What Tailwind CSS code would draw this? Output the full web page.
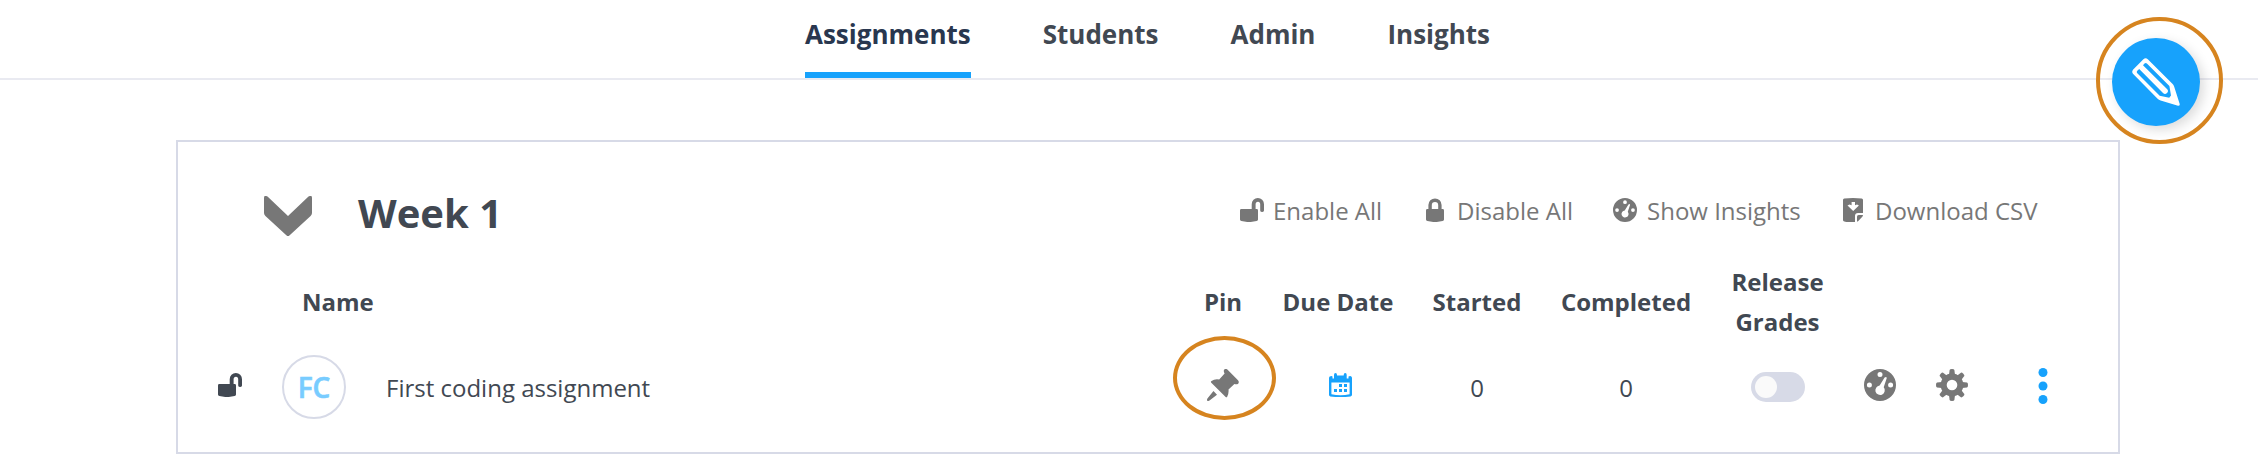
<!DOCTYPE html>
<html lang="en">
<head>
<meta charset="utf-8">
<title>Assignments</title>
<script src="https://cdn.jsdelivr.net/npm/@tailwindcss/browser@4"></script>
</head>
<body class="relative h-[472px] w-[2258px] overflow-hidden bg-white font-['Open_Sans',sans-serif] text-2xl text-[#414852]">
<svg class="hidden">
  <symbol id="unlock" viewBox="0 0 24 24"><path d="M1.2 11H11.7V6.2A6.15 6.15 0 0 1 24 6.2V12.6Q24 14 22.4 14Q20.2 14 20.2 12.4V6.6Q20.2 3.8 18 3.8Q15.6 3.8 15.6 6.6V11H16.8Q18 11 18 12.4V21.4Q18 22.7 16.6 23.1Q9 25 1.4 23.1Q0 22.700 0 21.4V12.400Q0 11 1.200 11Z"/></symbol>
  <symbol id="gauge" viewBox="0 0 32 32"><path fill-rule="evenodd" d="M16 0A16 16 0 1 1 16 32A16 16 0 1 1 16 0ZM16 3.100A2.500 2.500 0 1 0 16 8.100A2.500 2.500 0 1 0 16 3.100ZM5.400 13.600A2.500 2.500 0 1 0 5.400 18.600A2.500 2.500 0 1 0 5.400 13.600ZM26.600 13.600A2.500 2.500 0 1 0 26.600 18.600A2.500 2.500 0 1 0 26.600 13.600ZM20.600 8.500L15.600 16.600A4.700 4.700 0 1 0 19.700 18.300L22.700 9.200Q22.700 7.200 20.600 8.500Z"/></symbol>
</svg>

<header class="flex h-20 items-end border-b-2 border-[#e9eaf1] pl-[805px] text-[26px] font-bold leading-9">
  <nav class="flex h-[78px] gap-[72px] pt-4">
    <a class="border-b-[6px] border-[#17a2fc] text-[#29374f]">Assignments</a>
    <a>Students</a>
    <a>Admin</a>
    <a>Insights</a>
  </nav>
</header>

<main class="ml-[176px] mt-[60px] h-[314px] w-[1944px] border-2 border-[#d7dae7]">
  <div class="flex h-[120px] items-start">
    <svg class="ml-[86px] mt-[54px] h-10 w-12 shrink-0 fill-[#777]" viewBox="0 0 48 40"><path d="M3.500 .6L24 20L44.500 .6Q48-1.500 48 2V17Q48 18.700 46.600 20L25.400 39.400Q24 40.500 22.600 39.400L1.400 20Q0 18.700 0 17V2Q0-1.500 3.500 .6Z"/></svg>
    <h1 class="ml-[46px] mt-11 w-[882px] text-[40px] font-bold leading-[54px]">Week 1</h1>
    <div class="mt-[52px] flex whitespace-nowrap leading-[33px] text-[#777]">
      <div class="flex w-[186px]"><svg class="mr-[9px] mt-1 size-6 fill-current"><use href="#unlock"/></svg>Enable All</div>
      <div class="flex w-[187px]"><svg class="mr-[13px] mt-1 h-6 w-[18px] fill-current" viewBox="0 0 18 24"><path fill-rule="evenodd" d="M1.300 11H2.400V7A6.500 6.500 0 0 1 15.600 7V11H16.700Q18 11 18 12.400V21.400Q18 22.700 16.600 23.100Q9 25 1.400 23.100Q0 22.700 0 21.400V12.400Q0 11 1.300 11ZM5.800 11H12.200V7.200A3.200 3.200 0 0 0 5.800 7.200Z"/></svg>Disable All</div>
      <div class="flex w-[230px]"><svg class="mr-[10px] mt-1 size-6 fill-current"><use href="#gauge"/></svg>Show Insights</div>
      <div class="flex"><svg class="mr-3 mt-1 h-6 w-5 fill-current" viewBox="0 0 20 24"><path fill-rule="evenodd" d="M1.300 .6Q10-.5 18.700 .6Q20 .8 20 2V15H15Q12 15 12 18V24H6Q3 24 1.300 23.500Q0 23.300 0 22V2Q0 .8 1.300 .6ZM8.600 4V7.200L6.500 6.600L4.500 7.500L10.200 13L15.900 7.500L14 6.600L12 7.200V4Z"/><path d="M14 23.600V18.600Q14 17 15.600 17H20Q20 17.900 19.300 18.700L15.300 22.900Q14.700 23.500 14 23.600Z"/></svg>Download CSV</div>
    </div>
  </div>

  <div class="grid h-20 grid-cols-[1010px_70px_160px_118px_180px_123px_1fr] items-center text-center font-bold leading-10">
    <div class="pl-[124px] text-left">Name</div>
    <div>Pin</div>
    <div>Due Date</div>
    <div>Started</div>
    <div>Completed</div>
    <div>Release<br>Grades</div>
  </div>

  <div class="grid h-[100px] grid-cols-[1010px_70px_160px_118px_180px_133px_1fr] items-start text-center leading-[33px]">
    <div class="flex">
      <svg class="ml-10 mt-[31px] size-6 fill-current"><use href="#unlock"/></svg>
      <div class="ml-10 mt-[13px] flex size-16 items-center justify-center rounded-full border-2 border-[#d7dae7] text-[28px] font-semibold text-[#78ccff] [-webkit-text-stroke:0.6px_#78ccff]">FC</div>
      <div class="ml-10 mt-[29px]">First coding assignment</div>
    </div>
    <svg class="ml-[19px] mt-[27px] size-8 fill-[#777]" viewBox="0 0 32 32"><path d="M17.200 .6Q19-.8 20.600 .7L31 11.200Q32.500 13 31.200 14.700Q29.500 15.800 27.400 15L21.500 20.500Q22 24 20.200 27.800Q19.600 28.800 18.400 27.800L4.300 13.800Q3.300 12.700 4.500 11.900Q7.600 9.800 12.200 10.500L17.600 4.500Q16.200 2.300 17.200 .6ZM6.500 22L10 25.700L2.500 31.500Q.8 32.600 .1 31.500Q-.3 30.700 .6 29.300Z"/></svg>
    <svg class="ml-[71px] mt-[31px] h-6 w-[23px] fill-[#17a2fc]" viewBox="0 0 23 24"><path fill-rule="evenodd" d="M5 2Q5 0 6.500 0Q8 0 8 2V2.500H14.700V2Q14.700 0 16.200 0Q17.700 0 17.700 2V5.500H19.500V3.500Q21 2.500 22 3.300Q23 3.800 23 5V22Q23 23 21.500 23.400Q11.500 24.600 1.300 23.400Q0 23 0 22V5Q0 3.500 1.500 3.300Q2.500 2.500 3.500 3.500V5.500H5ZM2.400 9.500V21.300Q11.500 23 20.600 21.300V9.500Z"/><path d="M10 11H13V14H10ZM15 11H18V14H15ZM5 16H8V19H5ZM10 16H13V19H10ZM15 16H18V19H15Z"/></svg>
    <div class="mt-[29px]">0</div>
    <div class="mt-[29px]">0</div>
    <div class="ml-[35px] mt-[30px] h-[30px] w-[54px] rounded-full bg-[#d7dae7] p-1"><div class="size-[22px] rounded-full bg-[#fafafa]"></div></div>
    <div class="flex pl-[15px]">
      <svg class="mt-[27px] size-8 fill-[#777]"><use href="#gauge"/></svg>
      <svg class="ml-10 mt-[27px] size-8" viewBox="-16 -16 32 32"><g fill="#777"><g id="teeth"><path id="tooth" d="M-3-10L-2.400-15Q-2.200-16 0-16Q2.200-16 2.400-15L3-10V10L2.400 15Q2.200 16 0 16Q-2.200 16-2.400 15L-3 10Z"/><use href="#tooth" transform="rotate(90)"/></g><use href="#teeth" transform="rotate(45)"/><circle r="11.400"/></g><circle r="5.300" fill="#fff"/></svg>
      <svg class="ml-[70px] mt-[26px] h-9 w-[10px] fill-[#17a2fc]" viewBox="0 0 10 36"><circle cx="5" cy="4.500" r="4.500"/><circle cx="5" cy="18" r="4.500"/><circle cx="5" cy="31.500" r="4.500"/></svg>
    </div>
  </div>
</main>

<button class="absolute left-[2112px] top-[38px] flex size-[88px] items-center justify-center rounded-full bg-[#17a2fc] shadow-[4px_4px_12px_rgba(0,0,0,0.14)]">
  <svg class="size-12" viewBox="0 0 48 48"><path fill="#fff" fill-rule="evenodd" d="M1.200 11.400L11.400 1.200Q13.600-.8 15.800 1.200L40.400 25.800Q41.600 27 42.200 28.800L47.700 46Q48 48 46 47.800L28.600 42.600Q26.800 42 25.600 40.800L1.200 16Q-.8 13.700 1.200 11.400ZM5.300 12.700Q4.200 14 5.300 15.200L27.700 37.700L37.200 39.800L39 37.500L37.400 28L14.900 5.600Q13.700 4.600 12.500 5.600L11 7.200L35 31A2.700 2.700 0 0 1 31 35L7.200 10.900Z"/></svg>
</button>
<div class="absolute left-[2096px] top-[17px] h-[127px] w-[127px] rounded-full border-4 border-[#d6841f]"></div>
<div class="absolute left-[1173px] top-[336px] h-[84px] w-[103px] rounded-[50%] border-4 border-[#d6841f]"></div>
</body>
</html>
